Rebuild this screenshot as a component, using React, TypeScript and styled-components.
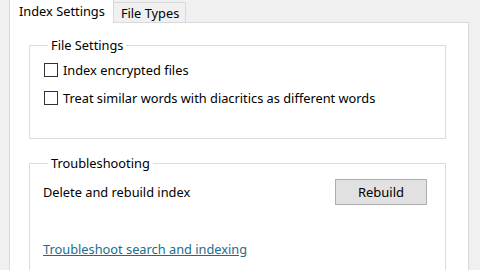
import React from 'react';
import styled, { createGlobalStyle } from 'styled-components';

const GlobalStyle = createGlobalStyle`
  html, body {
    margin: 0;
    padding: 0;
    background: #f0f0f0;
    font-family: 'Noto Sans', 'Open Sans', sans-serif;
    font-size: 12.8px;
    color: #000;
  }
`;

const Window = styled.div`
  display: flex;
  flex-direction: column;
  width: 460px;
  height: 270px;
  margin-left: 9px;
  overflow: hidden;
`;

const TabStrip = styled.div`
  display: flex;
  align-items: flex-end;
  height: 22px;
`;

const Tab = styled.div<{ $active?: boolean }>`
  box-sizing: border-box;
  display: flex;
  align-items: center;
  height: ${(p) => (p.$active ? '23px' : '20px')};
  margin-bottom: ${(p) => (p.$active ? '-1px' : '0')};
  padding: ${(p) => (p.$active ? '0 8px 2px 9px' : '0 6px 0 7px')};
  background: ${(p) => (p.$active ? '#fff' : '#f0f0f0')};
  border: 1px solid #d9d9d9;
  border-top: ${(p) => (p.$active ? 'none' : '1px solid #d9d9d9')};
  border-bottom: none;
  border-left: ${(p) => (p.$active ? '1px solid #d9d9d9' : 'none')};
  position: relative;
  z-index: ${(p) => (p.$active ? 1 : 0)};
  white-space: nowrap;
`;

const Panel = styled.div`
  flex: 1;
  display: flex;
  flex-direction: column;
  gap: 16px;
  background: #fff;
  border: 1px solid #d9d9d9;
  box-shadow: 2px 0 0 #e6e6e6;
  padding: 14px 22px 0 19px;
`;

const GroupBox = styled.fieldset<{ $height: number }>`
  margin: 0;
  padding: 0 0 0 13px;
  border: 1px solid #dcdcdc;
  height: ${(p) => p.$height}px;
  box-sizing: border-box;
  display: flex;
  flex-direction: column;
`;

const Legend = styled.legend`
  margin-left: 5px;
  padding: 0 3px;
  line-height: 16px;
`;

const CheckList = styled.div`
  display: flex;
  flex-direction: column;
  padding-top: 3px;
`;

const CheckRow = styled.label`
  display: flex;
  align-items: center;
  gap: 5px;
  height: 28px;
  margin-left: 1px;
`;

const CheckBox = styled.span`
  box-sizing: border-box;
  width: 14px;
  height: 14px;
  border: 1px solid #333;
  background: #fff;
  flex-shrink: 0;
`;

const ActionRow = styled.div`
  display: flex;
  align-items: center;
  justify-content: space-between;
  padding-right: 18px;
  margin-top: 8px;
  height: 26px;
`;

const Button = styled.button`
  width: 92px;
  height: 26px;
  background: #e1e1e1;
  border: 1px solid #adadad;
  font-family: inherit;
  font-size: 13px;
  color: #000;
  padding: 0;
`;

const Link = styled.a`
  margin-top: 35px;
  color: #1b6d8c;
  text-decoration: underline;
  cursor: pointer;
`;

const App = () => {
  return (
    <>
      <GlobalStyle />
      <Window>
        <TabStrip>
          <Tab $active>Index Settings</Tab>
          <Tab>File Types</Tab>
        </TabStrip>
        <Panel>
          <GroupBox $height={102}>
            <Legend>File Settings</Legend>
            <CheckList>
              <CheckRow>
                <CheckBox />
                Index encrypted files
              </CheckRow>
              <CheckRow>
                <CheckBox />
                Treat similar words with diacritics as different words
              </CheckRow>
            </CheckList>
          </GroupBox>
          <GroupBox $height={140}>
            <Legend>Troubleshooting</Legend>
            <ActionRow>
              <span>Delete and rebuild index</span>
              <Button>Rebuild</Button>
            </ActionRow>
            <Link>Troubleshoot search and indexing</Link>
          </GroupBox>
        </Panel>
      </Window>
    </>
  );
};

export default App;
